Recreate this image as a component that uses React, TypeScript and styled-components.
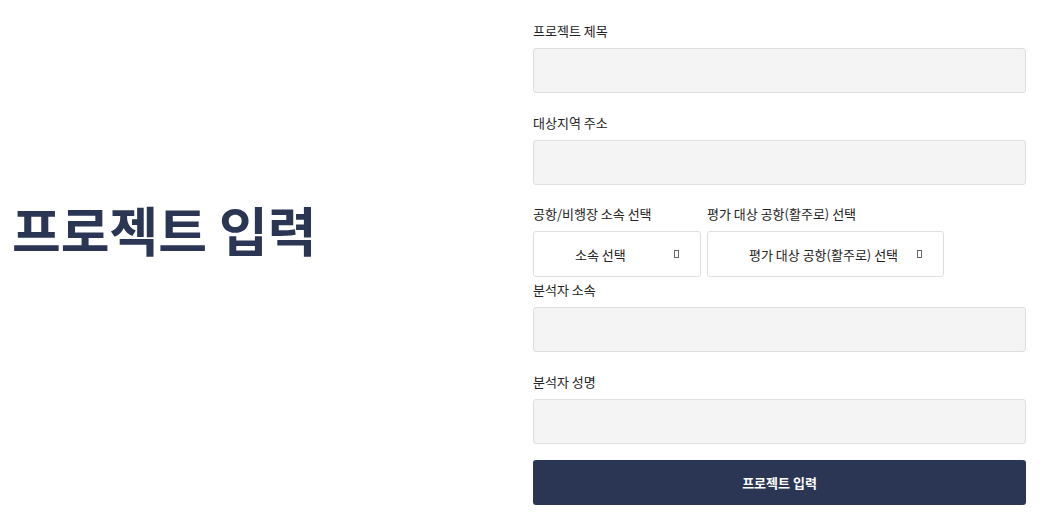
import React from "react";
import styled, { createGlobalStyle } from "styled-components";

const Global = createGlobalStyle`
  html, body { margin: 0; padding: 0; background: #fff; }
  body { font-family: "Noto Sans CJK KR", "Noto Sans", sans-serif; color: #222; }
  * { box-sizing: border-box; }
`;

const Page = styled.div`
  display: flex;
  width: 1061px;
  height: 520px;
`;

const Left = styled.div`
  width: 533px;
  display: flex;
  align-items: center;
  padding-left: 12px;
  padding-bottom: 62px;
`;

const Title = styled.h1`
  margin: 0;
  font-size: 53px;
  font-weight: 700;
  color: #2b3654;
  letter-spacing: 0;
`;

const Form = styled.div`
  width: 493px;
  padding-top: 22px;
  display: flex;
  flex-direction: column;
`;

const Field = styled.div<{ $mb?: number }>`
  display: flex;
  flex-direction: column;
  margin-bottom: ${(p) => p.$mb ?? 20.5}px;
`;

const Label = styled.label`
  font-size: 13px;
  line-height: 17px;
  height: 17px;
  margin-bottom: 9px;
  color: #222;
`;

const Input = styled.div`
  height: 45px;
  border: 1px solid #dedede;
  border-radius: 3px;
  background: #f4f4f4;
`;

const Row = styled.div`
  display: flex;
  gap: 6px;
  margin-bottom: 4px;
`;

const Select = styled.div<{ $w: number }>`
  width: ${(p) => p.$w}px;
  height: 46px;
  border: 1px solid #dedede;
  border-radius: 3px;
  background: #fff;
  display: flex;
  align-items: center;
  justify-content: space-between;
  padding: 0 21px 0 41px;
  font-size: 13px;
  color: #222;
`;

const Tofu = styled.span`
  width: 5px;
  height: 8px;
  border: 1px solid #666;
  display: inline-block;
`;

const Button = styled.button`
  height: 45px;
  border: none;
  border-radius: 3px;
  background: #2b3654;
  color: #fff;
  font-family: inherit;
  font-size: 13px;
  font-weight: 700;
  margin-top: -4px;
`;

export default function App() {
  return (
    <Page>
      <Global />
      <Left>
        <Title>프로젝트 입력</Title>
      </Left>
      <Form>
        <Field>
          <Label>프로젝트 제목</Label>
          <Input />
        </Field>
        <Field>
          <Label>대상지역 주소</Label>
          <Input />
        </Field>
        <Row>
          <Field $mb={0}>
            <Label>공항/비행장 소속 선택</Label>
            <Select $w={168}>
              <span>소속 선택</span>
              <Tofu />
            </Select>
          </Field>
          <Field $mb={0}>
            <Label>평가 대상 공항(활주로) 선택</Label>
            <Select $w={237}>
              <span>평가 대상 공항(활주로) 선택</span>
              <Tofu />
            </Select>
          </Field>
        </Row>
        <Field>
          <Label>분석자 소속</Label>
          <Input />
        </Field>
        <Field>
          <Label>분석자 성명</Label>
          <Input />
        </Field>
        <Button>프로젝트 입력</Button>
      </Form>
    </Page>
  );
}
